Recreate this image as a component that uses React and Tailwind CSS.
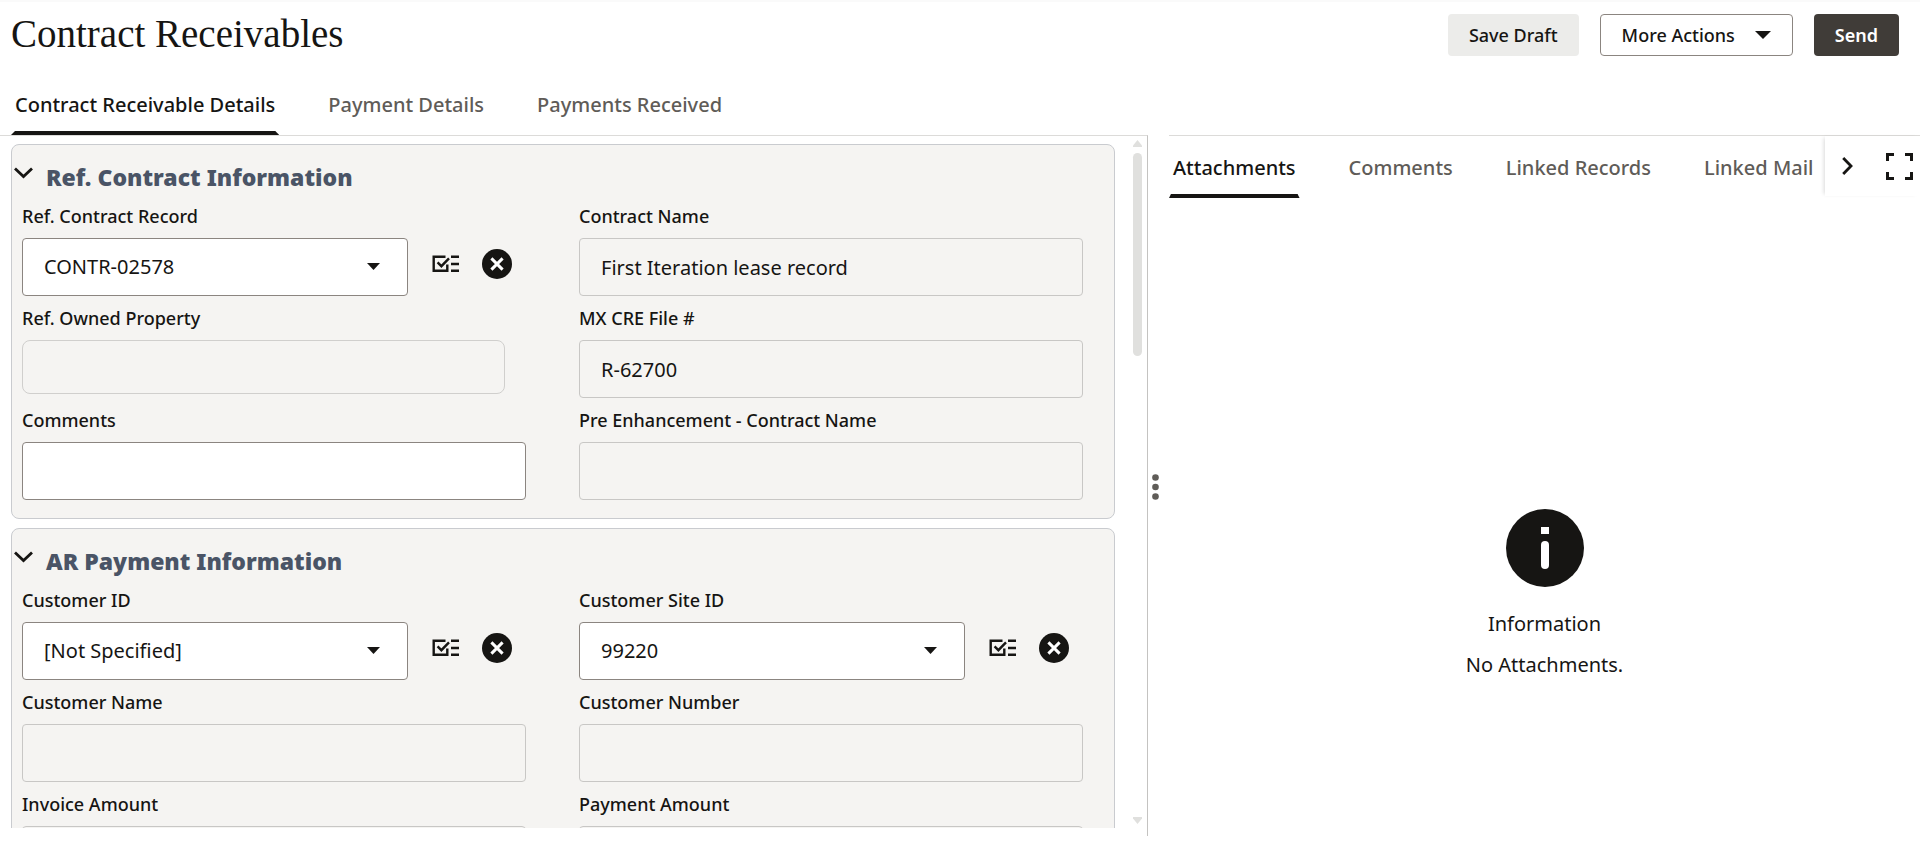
import React from "react";

function ListCheckIcon() {
  return (
    <svg width="28" height="18" viewBox="0 0 28 18" fill="none" stroke="#161513" strokeWidth="2.4" aria-hidden="true">
      <path d="M13.5 1.7H1.7V15.8H15.3V9.5" />
      <path d="M5.6 7.4L9.4 11.2L17 3.4" strokeWidth="2.4" />
      <path d="M19 1.7H27M19 9H27M19 15.8H27" />
    </svg>
  );
}

function ClearIcon() {
  return (
    <svg width="30" height="30" viewBox="0 0 30 30" aria-hidden="true">
      <circle cx="15" cy="15" r="15" fill="#161513" />
      <path d="M9.4 9.4L20.6 20.6M20.6 9.4L9.4 20.6" stroke="#fff" strokeWidth="3" />
    </svg>
  );
}

function Label({ id, children }) {
  return (
    <label htmlFor={id} className="block text-[18px] leading-6 font-medium text-[#161513]">
      {children}
    </label>
  );
}

function TextField({ id, label, value = "", editable = false }) {
  return (
    <div className="flex h-[102px] flex-col gap-2.5">
      <Label id={id}>{label}</Label>
      <input
        id={id}
        type="text"
        defaultValue={value}
        readOnly={!editable}
        className={
          editable
            ? "h-[58px] w-full rounded border border-[#8b8580] bg-white px-[21px] text-[20px]"
            : "h-[58px] w-full rounded border border-[#c8c7c5] bg-[#f5f4f2] px-[21px] text-[20px]"
        }
      />
    </div>
  );
}

function PickerPlaceholder({ id, label }) {
  return (
    <div className="flex h-[102px] flex-col gap-2.5">
      <Label id={id}>{label}</Label>
      <input
        id={id}
        type="text"
        readOnly
        className="mr-[21px] h-[54px] rounded-lg border border-[#d0cfcd] bg-[#f5f4f2] px-[21px] text-[20px]"
      />
    </div>
  );
}

function PickerField({ id, label, value }) {
  return (
    <div className="flex h-[102px] flex-col gap-2.5">
      <Label id={id}>{label}</Label>
      <div className="flex items-start pr-3.5">
        <div className="relative flex-1">
          <select
            id={id}
            defaultValue={value}
            className="h-[58px] w-full appearance-none rounded border border-[#8b8580] bg-white px-[21px] text-[20px]"
          >
            <option>{value}</option>
          </select>
          <svg className="pointer-events-none absolute top-[25px] right-7" width="13" height="7" viewBox="0 0 13 7" aria-hidden="true">
            <path d="M0 0H13L6.5 7Z" fill="#161513" />
          </svg>
        </div>
        <button type="button" aria-label={"Browse " + label} className="mt-[17px] ml-6">
          <ListCheckIcon />
        </button>
        <button type="button" aria-label={"Clear " + label} className="mt-[11px] ml-[22px]">
          <ClearIcon />
        </button>
      </div>
    </div>
  );
}

function Section({ title, children }) {
  return (
    <section className="rounded-lg border border-[#c9cbcf] bg-[#f5f4f2] pb-2">
      <h2 className="flex pt-4 pl-0.5">
        <button type="button" className="flex gap-[13px] text-left">
          <svg className="mt-1.5" width="19" height="12" viewBox="0 0 19 12" fill="none" aria-hidden="true">
            <path d="M1 1.5L9.5 9.5L18 1.5" stroke="#161513" strokeWidth="2.8" />
          </svg>
          <span className="text-[23px] leading-8 font-black text-[#4a5466]">{title}</span>
        </button>
      </h2>
      <div className="grid grid-cols-2 gap-x-[53px] pt-[11px] pr-[31px] pl-2.5">{children}</div>
    </section>
  );
}

function Tab({ active = false, children }) {
  return (
    <button type="button" role="tab" aria-selected={active} className="flex shrink-0 flex-col">
      <span className={active ? "px-1 text-[20px] leading-7 font-medium text-[#161513]" : "px-1 text-[20px] leading-7 font-medium text-[#5f5c58]"}>
        {children}
      </span>
      {active && (
        <svg className="mt-3 w-full" height="4" viewBox="0 0 100 4" preserveAspectRatio="none" aria-hidden="true">
          <path d="M0 4L1.5 0H98.5L100 4Z" fill="#161513" />
        </svg>
      )}
    </button>
  );
}

export default function App() {
  return (
    <div className="flex h-screen flex-col overflow-hidden border-t-2 border-[#fafafa] bg-white font-['Noto_Sans',sans-serif] text-[#161513]">
      <header className="flex h-[86px] items-start justify-between pt-3 pr-[21px] pl-[11px]">
        <h1 className="font-['Liberation_Serif',serif] text-[39px] leading-10">Contract Receivables</h1>
        <div className="flex gap-[21px] text-[18px] font-medium">
          <button type="button" className="h-[42px] rounded bg-[#ececea] px-[21px]">Save Draft</button>
          <button type="button" className="flex h-[42px] items-center gap-5 rounded border border-[#8b8580] px-[21px]">
            More Actions
            <svg width="16" height="8" viewBox="0 0 16 8" aria-hidden="true">
              <path d="M0 0H16L8 8Z" fill="#161513" />
            </svg>
          </button>
          <button type="button" className="h-[42px] rounded bg-[#403c38] px-[21px] font-semibold text-white">Send</button>
        </div>
      </header>

      <div role="tablist" aria-label="Record" className="flex h-[47px] gap-[45px] pt-[3px] pl-[11px]">
        <Tab active>Contract Receivable Details</Tab>
        <Tab>Payment Details</Tab>
        <Tab>Payments Received</Tab>
      </div>

      <div className="flex min-h-0 flex-1">
        <main className="mb-[7px] flex w-[1148px] shrink-0 border-t border-r border-t-[#dcdbd9] border-r-[#c4c3c1] pb-2">
          <div className="min-w-0 flex-1 overflow-hidden pt-2 pl-[11px]">
            <div className="flex flex-col gap-[9px]">
              <Section title="Ref. Contract Information">
                <PickerField id="contract-record" label="Ref. Contract Record" value="CONTR-02578" />
                <TextField id="contract-name" label="Contract Name" value="First Iteration lease record" />
                <PickerPlaceholder id="owned-property" label="Ref. Owned Property" />
                <TextField id="mx-file" label="MX CRE File #" value="R-62700" />
                <TextField id="comments" label="Comments" editable />
                <TextField id="pre-name" label="Pre Enhancement - Contract Name" />
              </Section>
              <Section title="AR Payment Information">
                <PickerField id="customer-id" label="Customer ID" value="[Not Specified]" />
                <PickerField id="site-id" label="Customer Site ID" value="99220" />
                <TextField id="customer-name" label="Customer Name" />
                <TextField id="customer-number" label="Customer Number" />
                <TextField id="invoice-amount" label="Invoice Amount" />
                <TextField id="payment-amount" label="Payment Amount" />
              </Section>
            </div>
          </div>
          <div className="flex w-8 flex-col items-end pt-1 pr-[5px]" aria-hidden="true">
            <svg width="9" height="7" viewBox="0 0 9 7"><path d="M4.5 0L9 5.5V7H0V5.5Z" fill="#e0e0de" /></svg>
            <div className="mt-1.5 h-[203px] w-[9px] rounded-full bg-[#e0e0de]" />
            <svg className="mt-auto mb-1" width="9" height="7" viewBox="0 0 9 7"><path d="M4.5 7L9 1.5V0H0V1.5Z" fill="#e0e0de" /></svg>
          </div>
        </main>

        <div className="flex w-[21px] shrink-0 items-center pb-1 pl-1" aria-hidden="true">
          <svg width="7" height="26" viewBox="0 0 7 26" fill="#5f5c58">
            <circle cx="3.5" cy="3.5" r="3.3" />
            <circle cx="3.5" cy="13" r="3.3" />
            <circle cx="3.5" cy="22.5" r="3.3" />
          </svg>
        </div>

        <aside className="flex min-w-0 flex-1 flex-col border-t border-[#dcdbd9]">
          <div className="flex h-[62px]">
            <div role="tablist" aria-label="Related" className="flex min-w-0 flex-1 gap-[45px] overflow-hidden pt-[18px]">
              <Tab active>Attachments</Tab>
              <Tab>Comments</Tab>
              <Tab>Linked Records</Tab>
              <Tab>Linked Mail</Tab>
            </div>
            <div className="flex h-[60px] w-[95px] shrink-0 items-center justify-between pr-[7px] pl-[17px] shadow-[-3px_0_4px_-2px_rgba(0,0,0,0.15)]">
              <button type="button" aria-label="More tabs">
                <svg width="11" height="18" viewBox="0 0 11 18" fill="none" stroke="#161513" strokeWidth="2.8">
                  <path d="M1.2 1L9 9L1.2 17" />
                </svg>
              </button>
              <button type="button" aria-label="Full screen">
                <svg width="27" height="27" viewBox="0 0 27 27" fill="none" stroke="#161513" strokeWidth="3">
                  <path d="M1.5 8V1.5H8M19 1.5H25.5V8M25.5 19V25.5H19M8 25.5H1.5V19" />
                </svg>
              </button>
            </div>
          </div>
          <div className="flex flex-1 flex-col items-center justify-center pt-[147px] text-[20px] leading-7">
            <svg width="78" height="78" viewBox="0 0 78 78" aria-hidden="true">
              <circle cx="39" cy="39" r="39" fill="#161513" />
              <rect x="35" y="18" width="8" height="7" fill="#fff" />
              <rect x="35" y="32" width="8" height="28" rx="4" fill="#fff" />
            </svg>
            <p className="mt-[23px]">Information</p>
            <p className="mt-[13px]">No Attachments.</p>
          </div>
        </aside>
      </div>
    </div>
  );
}
